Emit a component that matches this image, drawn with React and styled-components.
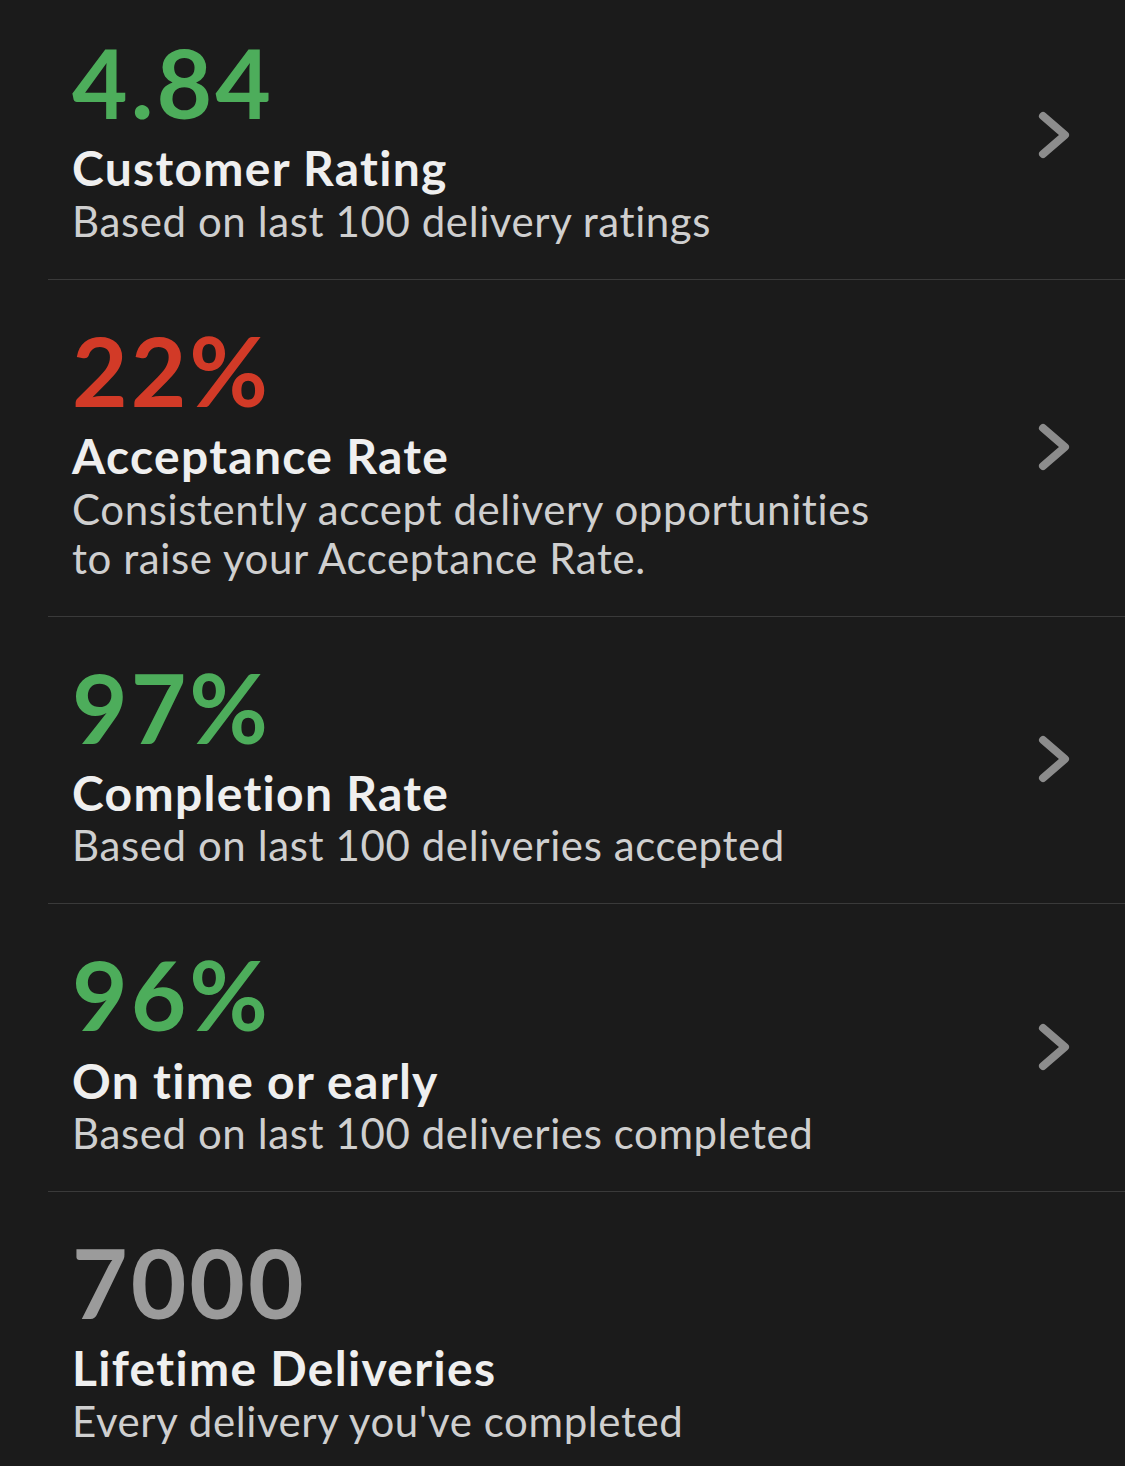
import React from "react";
import styled, { createGlobalStyle } from "styled-components";

const GlobalStyle = createGlobalStyle`
  html, body {
    margin: 0;
    padding: 0;
    background: #1b1b1b;
  }
  body {
    font-family: Lato, "Noto Sans", sans-serif;
    font-variant-ligatures: none;
    -webkit-font-smoothing: antialiased;
  }
`;

const Screen = styled.div`
  width: 1125px;
  min-height: 1466px;
  background: #1b1b1b;
  overflow: hidden;
`;

const List = styled.ul`
  list-style: none;
  margin: -8px 0 0 48px;
  padding: 0;
`;

const Row = styled.li`
  display: flex;
  align-items: center;
  justify-content: space-between;
  padding: 32px 54px 33px 24px;
  border-bottom: 1px solid ${(p) => (p.$last ? "transparent" : "#3a3a3a")};
`;

const Body = styled.div`
  display: flex;
  flex-direction: column;
`;

const Value = styled.div`
  font-size: 96px;
  line-height: 1.2;
  font-weight: 700;
  letter-spacing: 3px;
  color: ${(p) => p.$tone};
`;

const Title = styled.div`
  font-size: 48px;
  line-height: 1.2;
  font-weight: 700;
  letter-spacing: 1.3px;
  color: #efefef;
`;

const Caption = styled.div`
  font-size: 42px;
  line-height: 49px;
  font-weight: 400;
  letter-spacing: 0.6px;
  color: #cfcfcf;
  max-width: 840px;
`;

const Chevron = styled.svg`
  flex: none;
  width: 34px;
  height: 50px;
`;

const GREEN = "#4dad5b";
const RED = "#d23a27";
const GREY = "#9b9b9b";

const metrics = [
  {
    value: "4.84",
    tone: GREEN,
    title: "Customer Rating",
    caption: "Based on last 100 delivery ratings",
    link: true,
  },
  {
    value: "22%",
    tone: RED,
    title: "Acceptance Rate",
    caption:
      "Consistently accept delivery opportunities to raise your Acceptance Rate.",
    link: true,
  },
  {
    value: "97%",
    tone: GREEN,
    title: "Completion Rate",
    caption: "Based on last 100 deliveries accepted",
    link: true,
  },
  {
    value: "96%",
    tone: GREEN,
    title: "On time or early",
    caption: "Based on last 100 deliveries completed",
    link: true,
  },
  {
    value: "7000",
    tone: GREY,
    title: "Lifetime Deliveries",
    caption: "Every delivery you've completed",
    link: false,
  },
];

function ChevronRight() {
  return (
    <Chevron viewBox="0 0 34 50" aria-hidden="true">
      <polyline
        points="6,6 28,25 6,44"
        fill="none"
        stroke="#8c8c8c"
        strokeWidth="8"
        strokeLinecap="round"
        strokeLinejoin="round"
      />
    </Chevron>
  );
}

export default function App() {
  return (
    <Screen>
      <GlobalStyle />
      <List>
        {metrics.map((m, i) => (
          <Row key={m.title} $last={i === metrics.length - 1}>
            <Body>
              <Value $tone={m.tone}>{m.value}</Value>
              <Title>{m.title}</Title>
              <Caption>{m.caption}</Caption>
            </Body>
            {m.link && <ChevronRight />}
          </Row>
        ))}
      </List>
    </Screen>
  );
}
